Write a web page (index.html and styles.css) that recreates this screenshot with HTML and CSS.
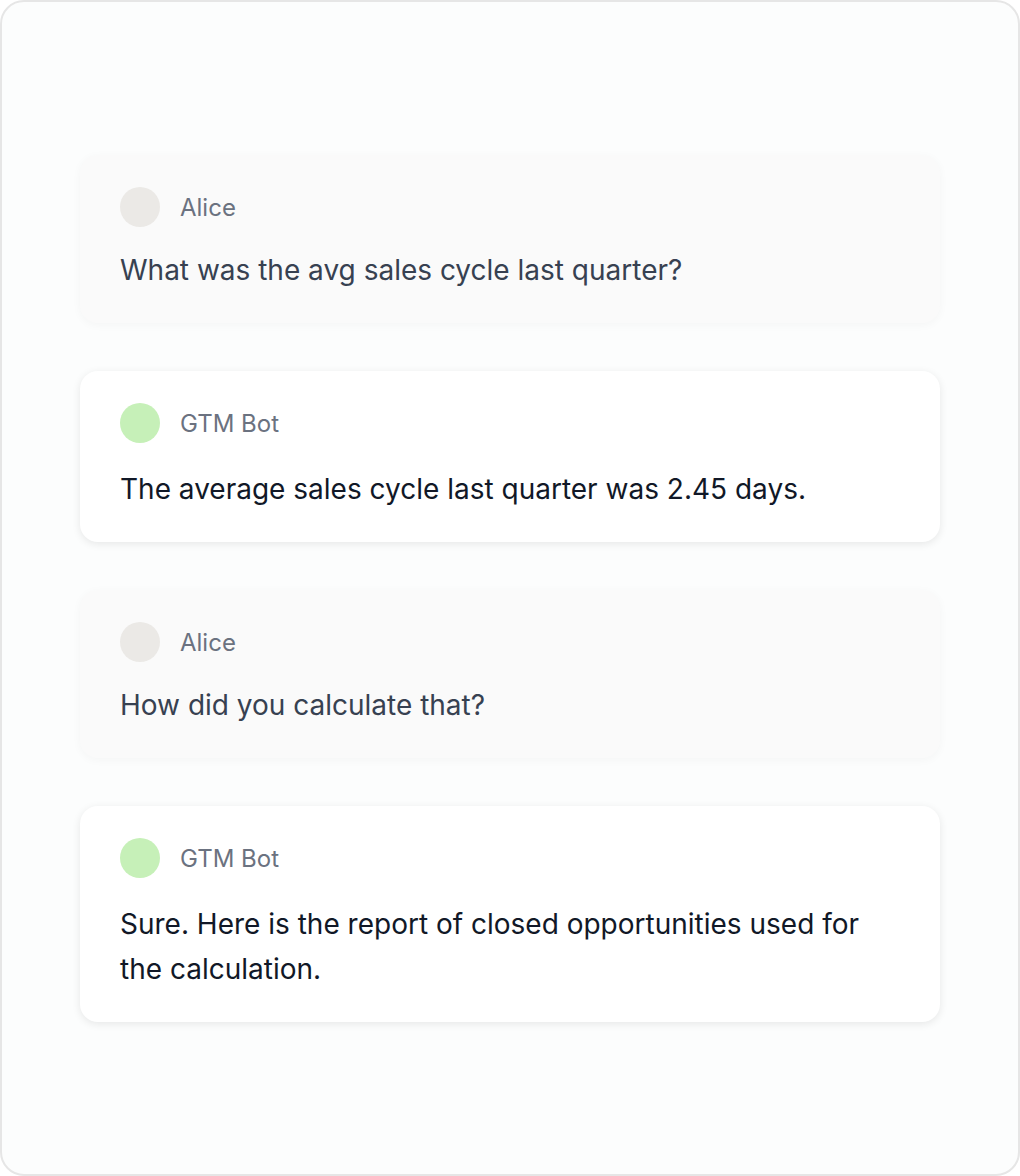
FILE: index.html
```html
<!DOCTYPE html>
<html lang="en">
<head>
<meta charset="utf-8">
<title>Chat</title>
<link rel="stylesheet" href="styles.css">
</head>
<body>
<div class="frame">
  <div class="thread">
    <div class="card user">
      <div class="head"><span class="avatar"></span><span class="name">Alice</span></div>
      <p class="msg">What was the avg sales cycle last quarter?</p>
    </div>
    <div class="card bot">
      <div class="head"><span class="avatar"></span><span class="name">GTM Bot</span></div>
      <p class="msg">The average sales cycle last quarter was 2.45 days.</p>
    </div>
    <div class="card user">
      <div class="head"><span class="avatar"></span><span class="name">Alice</span></div>
      <p class="msg">How did you calculate that?</p>
    </div>
    <div class="card bot">
      <div class="head"><span class="avatar"></span><span class="name">GTM Bot</span></div>
      <p class="msg">Sure. Here is the report of closed opportunities used for the calculation.</p>
    </div>
  </div>
</div>
</body>
</html>
```
FILE: styles.css
```css
* { box-sizing: border-box; }
html, body { margin: 0; padding: 0; background: #ffffff; }
body { font-family: Inter, "Noto Sans", sans-serif; }
.frame {
  width: 1020px;
  height: 1176px;
  border: 2px solid #e6e6e6;
  border-radius: 24px;
  background: #fcfdfd;
  padding: 153px 78px;
}
.thread { display: flex; flex-direction: column; gap: 48px; }
.card {
  border-radius: 18px;
  padding: 32px 40px 30px;
}
.card.user {
  background: #fafafa;
  box-shadow: 0 2px 10px rgba(0,0,0,0.035);
}
.card.bot {
  background: #ffffff;
  box-shadow: 0 2px 8px rgba(0,0,0,0.09);
}
.head { display: flex; align-items: center; gap: 20px; height: 40px; }
.avatar { width: 40px; height: 40px; border-radius: 50%; flex: none; }
.user .avatar { background: #ebe9e6; }
.bot .avatar { background: #c6f0b8; }
.name { font-size: 24px; color: #6b7280; }
.msg { margin: 0; font-size: 28px; line-height: 45px; }
.user .msg { color: #374151; margin-top: 21px; }
.bot .msg { color: #111827; margin-top: 24px; }
```
